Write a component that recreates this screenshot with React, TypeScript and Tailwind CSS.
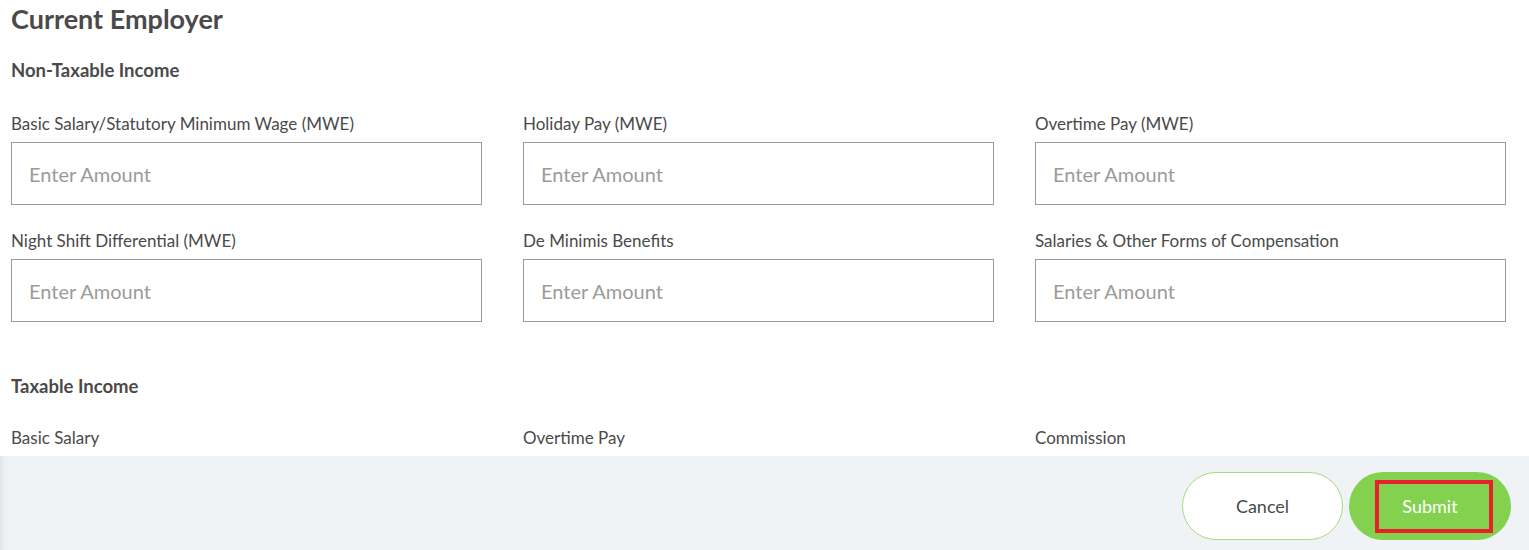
import type { ReactNode } from "react";

const fontStack = { fontFamily: "Lato, 'Noto Sans', sans-serif" };

function AmountField({ label }: { label: string }) {
  return (
    <div className="flex flex-col">
      <label className="text-[17px] leading-[24px] text-[#4a4a4a] mb-[6px]">{label}</label>
      <input
        type="text"
        placeholder="Enter Amount"
        className="h-[63px] w-full border border-[#9b9b9b] bg-white px-[17px] text-[20px] text-[#4a4a4a] placeholder:text-[#9b9b9b] outline-none"
        style={fontStack}
      />
    </div>
  );
}

function Section({ title, children }: { title: string; children: ReactNode }) {
  return (
    <section>
      <h3 className="text-[18.5px] leading-[24px] font-bold text-[#4a4a4a]">{title}</h3>
      {children}
    </section>
  );
}

export default function App() {
  return (
    <div className="h-[550px] w-full flex flex-col bg-white overflow-hidden" style={fontStack}>
      <div className="flex-1 overflow-hidden pl-[11px] pr-[23px]">
        <h2 className="text-[27px] leading-[38px] font-bold text-[#4a4a4a] mb-[20px]">Current Employer</h2>

        <Section title="Non-Taxable Income">
          <div className="grid grid-cols-3 gap-x-[41px] gap-y-[24px] mt-[30px]">
            <AmountField label="Basic Salary/Statutory Minimum Wage (MWE)" />
            <AmountField label="Holiday Pay (MWE)" />
            <AmountField label="Overtime Pay (MWE)" />
            <AmountField label="Night Shift Differential (MWE)" />
            <AmountField label="De Minimis Benefits" />
            <AmountField label="Salaries & Other Forms of Compensation" />
          </div>
        </Section>

        <div className="mt-[52px]">
          <Section title="Taxable Income">
            <div className="grid grid-cols-3 gap-x-[41px] gap-y-[24px] mt-[28px]">
              <AmountField label="Basic Salary" />
              <AmountField label="Overtime Pay" />
              <AmountField label="Commission" />
            </div>
          </Section>
        </div>
      </div>

      <footer className="h-[94px] shrink-0 bg-[#eff3f6] flex justify-end items-start pt-[16px] pr-[18px] gap-[6px] shadow-[inset_8px_0_8px_-8px_rgba(0,0,0,0.12)]">
        <button className="h-[68px] w-[161px] rounded-full border border-[#a6dc7f] bg-white text-[18px] text-[#4a4a4a]">
          Cancel
        </button>
        <button className="relative h-[68px] w-[162px] rounded-full bg-[#84d14f] text-[18px] text-white">
          Submit
          <span className="absolute left-[26px] top-[8px] h-[53px] w-[118px] border-4 border-[#e8202a]" />
        </button>
      </footer>
    </div>
  );
}
